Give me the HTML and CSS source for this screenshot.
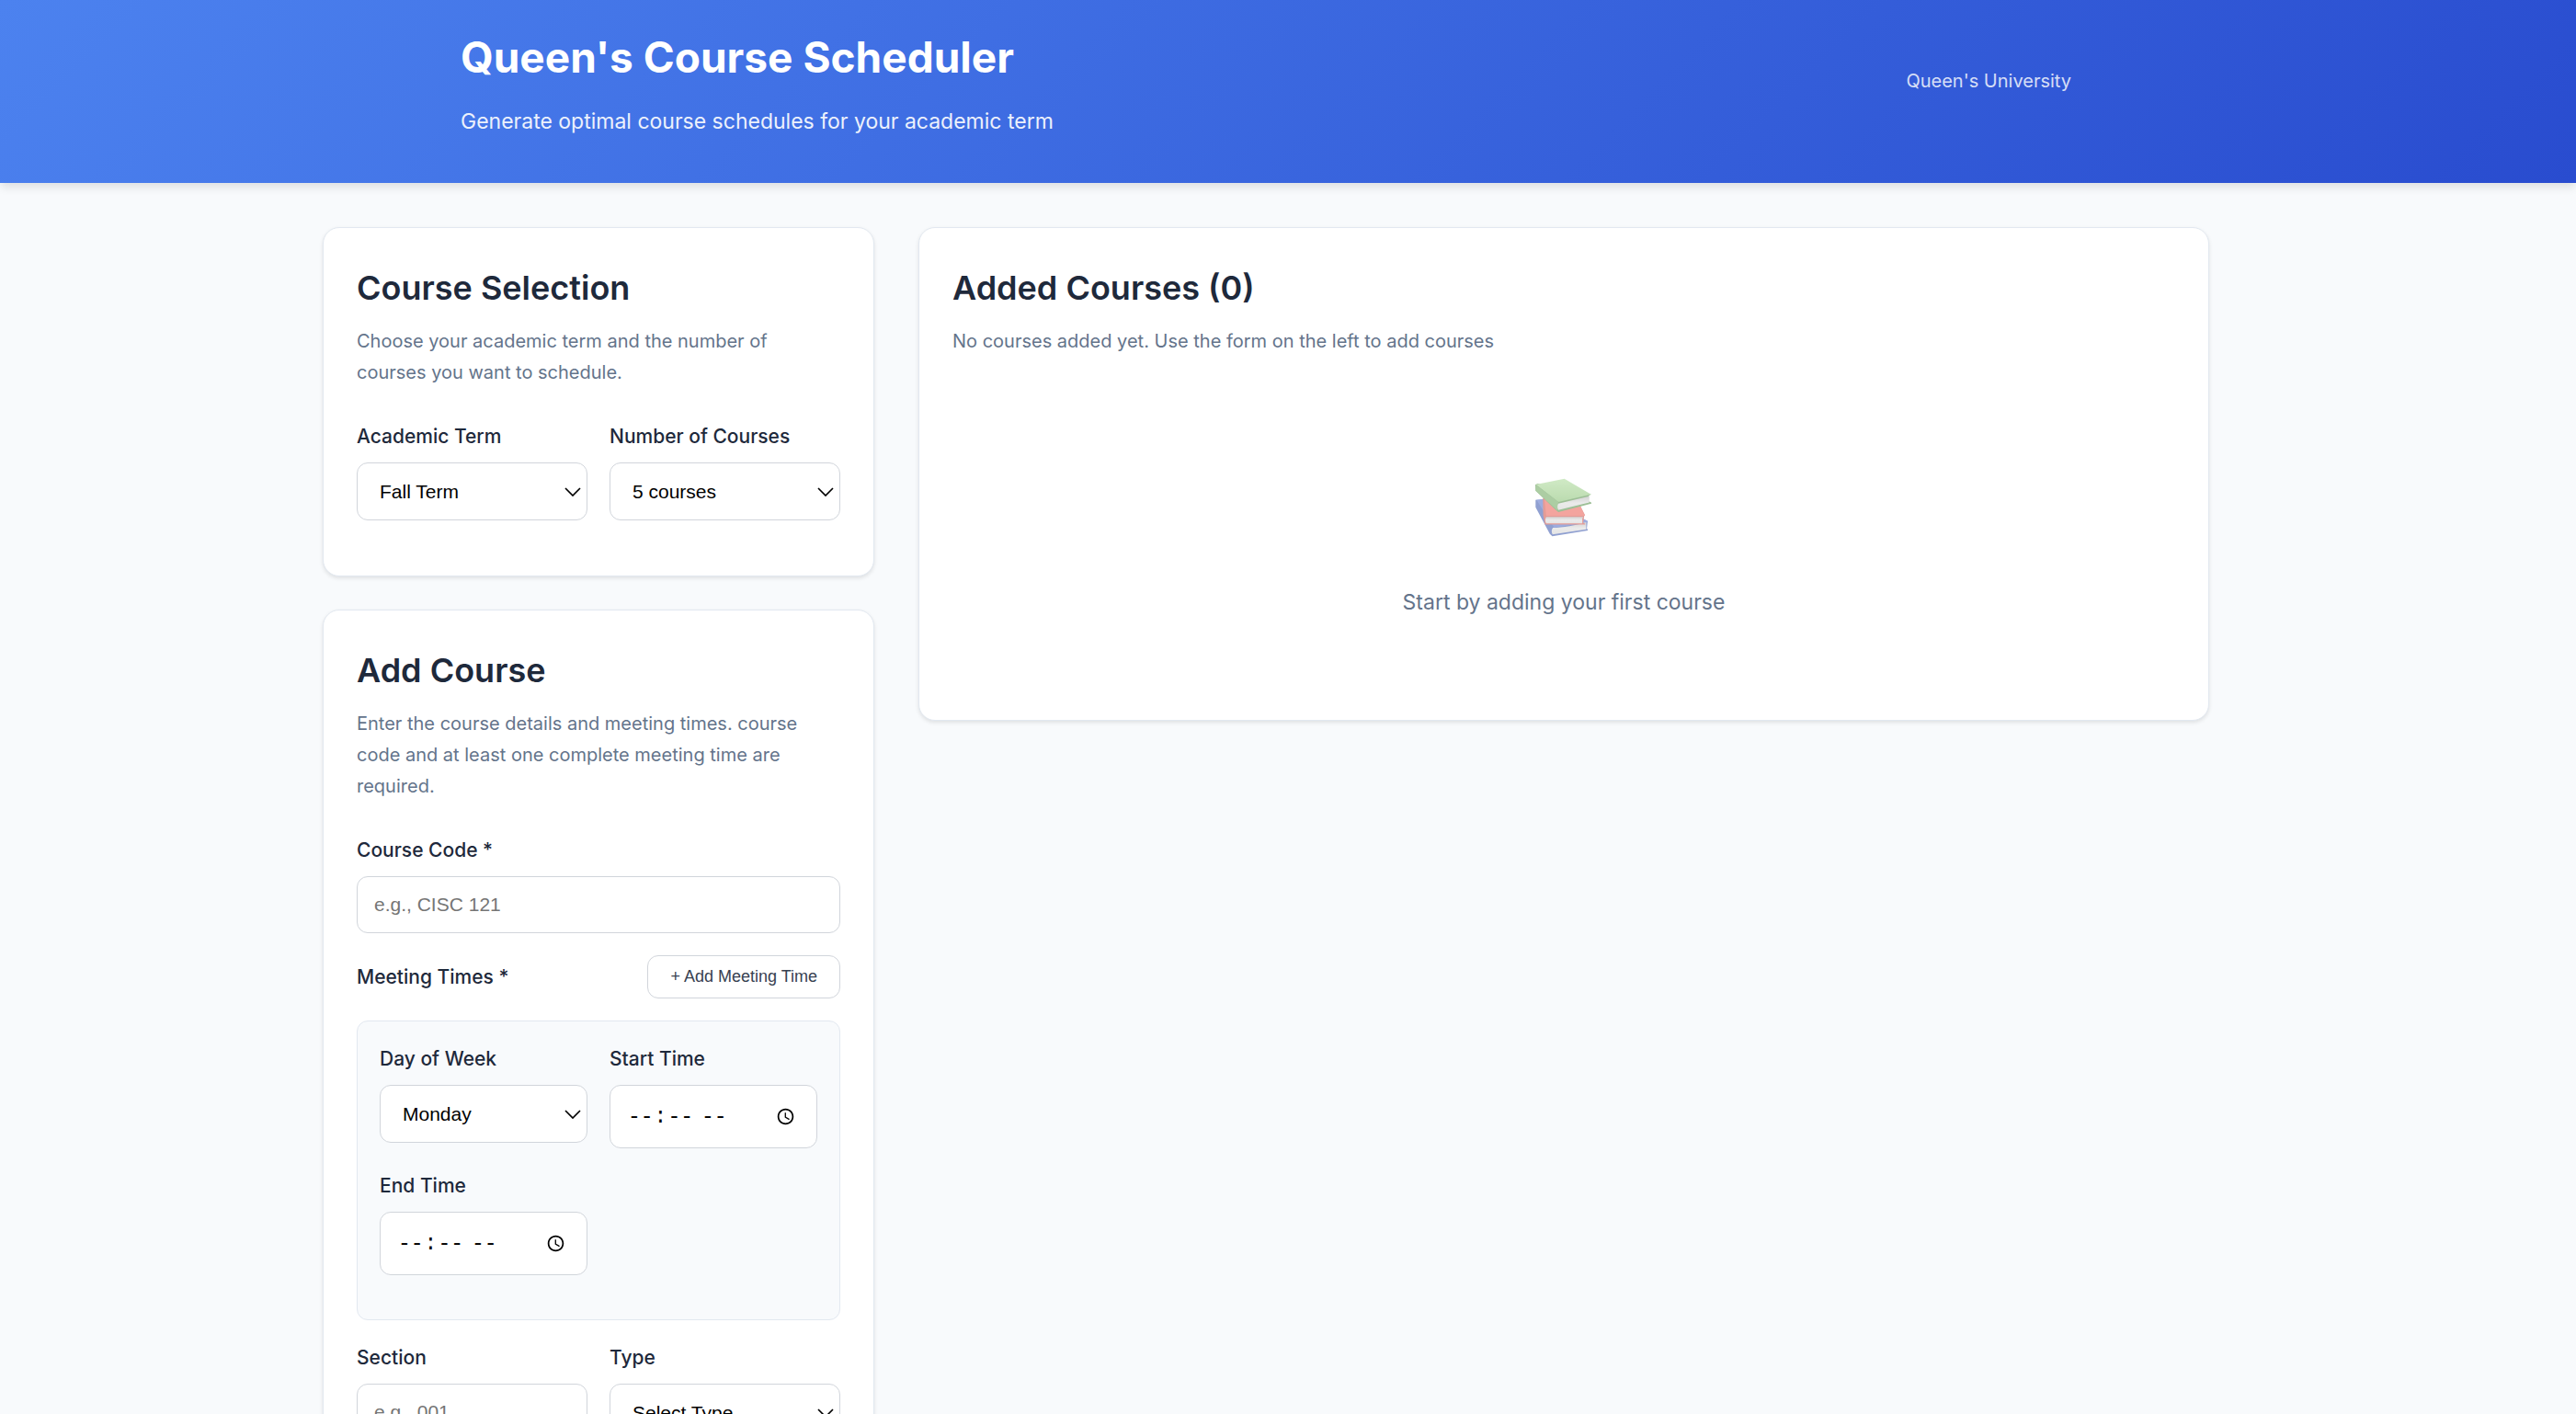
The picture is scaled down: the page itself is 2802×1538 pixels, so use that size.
FILE: index.html
```html
<!DOCTYPE html>
<html lang="en">
<head>
<meta charset="utf-8">
<meta name="viewport" content="width=device-width, initial-scale=1">
<title>Queen's Course Scheduler</title>
<link rel="stylesheet" href="styles.css">
</head>
<body>
<header class="site-header">
  <div class="header-inner">
    <div>
      <h1 class="site-title">Queen's Course Scheduler</h1>
      <p class="site-subtitle">Generate optimal course schedules for your academic term</p>
    </div>
    <span class="site-org">Queen's University</span>
  </div>
</header>
<main class="layout">
  <div class="sidebar">
    <section class="card">
      <h2 class="card-title">Course Selection</h2>
      <p class="card-text">Choose your academic term and the number of courses you want to schedule.</p>
      <div class="form-row">
        <div class="field">
          <label class="label" for="term">Academic Term</label>
          <div class="select">
            <select class="control" id="term"><option>Fall Term</option><option>Winter Term</option></select>
            <svg class="chevron" viewBox="0 0 18 10" aria-hidden="true"><path d="M1 1l8 8 8-8"/></svg>
          </div>
        </div>
        <div class="field">
          <label class="label" for="count">Number of Courses</label>
          <div class="select">
            <select class="control" id="count"><option>5 courses</option><option>4 courses</option></select>
            <svg class="chevron" viewBox="0 0 18 10" aria-hidden="true"><path d="M1 1l8 8 8-8"/></svg>
          </div>
        </div>
      </div>
    </section>
    <section class="card">
      <h2 class="card-title">Add Course</h2>
      <p class="card-text">Enter the course details and meeting times. course code and at least one complete meeting time are required.</p>
      <form>
        <div class="field">
          <label class="label" for="code">Course Code *</label>
          <input class="control" id="code" type="text" placeholder="e.g., CISC 121">
        </div>
        <div class="meeting-head">
          <span class="label" id="meetings">Meeting Times *</span>
          <button class="button" type="button">+ Add Meeting Time</button>
        </div>
        <div class="meeting form-row" role="group" aria-labelledby="meetings">
          <div class="field">
            <label class="label" for="day">Day of Week</label>
            <div class="select">
              <select class="control" id="day"><option>Monday</option><option>Tuesday</option></select>
              <svg class="chevron" viewBox="0 0 18 10" aria-hidden="true"><path d="M1 1l8 8 8-8"/></svg>
            </div>
          </div>
          <div class="field">
            <label class="label" for="start">Start Time</label>
            <input class="control time" id="start" type="time">
          </div>
          <div class="field">
            <label class="label" for="end">End Time</label>
            <input class="control time" id="end" type="time">
          </div>
        </div>
        <div class="form-row">
          <div class="field">
            <label class="label" for="section">Section</label>
            <input class="control" id="section" type="text" placeholder="e.g., 001">
          </div>
          <div class="field">
            <label class="label" for="type">Type</label>
            <div class="select">
              <select class="control" id="type"><option>Select Type</option><option>Lecture</option></select>
              <svg class="chevron" viewBox="0 0 18 10" aria-hidden="true"><path d="M1 1l8 8 8-8"/></svg>
            </div>
          </div>
        </div>
      </form>
    </section>
  </div>
  <section class="card">
    <h2 class="card-title">Added Courses (0)</h2>
    <p class="card-text">No courses added yet. Use the form on the left to add courses</p>
    <div class="empty">
      <svg class="books" viewBox="0 0 192 194" role="img" aria-label="Books">
        <defs>
          <linearGradient id="cover" x1="0" y1="0" x2="0" y2="1"><stop offset="0" stop-color="#a2d68c"/><stop offset="1" stop-color="#78b862"/></linearGradient>
          <linearGradient id="pages" x1="0" y1="0" x2="0" y2="1"><stop offset="0" stop-color="#a8a8a8"/><stop offset=".5" stop-color="#d8d8d8"/><stop offset="1" stop-color="#ccc"/></linearGradient>
        </defs>
        <path fill="#2444a4" d="M3 72l26-2 146 72-1 5-2 20 3 3v3L58 192 50 184 3 96z"/>
        <path fill="#3f5cc0" d="M6 72l22-1 144 70 2 5-110 17z"/>
        <path fill="url(#pages)" d="M60 164c30 0 80-8 110-19v24L59 186c-4-7-4-16 1-22z"/>
        <path fill="#c93a30" d="M27 66l120 20 19 36-3 4-3 22 6 2v3H34l-6-30z"/>
        <path fill="#e84c40" d="M32 68l116 18 17 38H38z"/>
        <path fill="url(#pages)" d="M38 128h122l-3 5v16H38c-4-6-4-15 0-21z"/>
        <path fill="#3e8030" d="M2 22l8-4 158 34 18 1-8 6v17l9 5v3L78 112 68 104 3 42z"/>
        <path fill="url(#cover)" d="M4 21L98 2l88 52L78 79z"/>
        <path fill="#5c9c4a" d="M4 22l74 57-3 28L3 42z"/>
        <path fill="url(#pages)" d="M78 84l102-24v20L78 105c-4-6-4-15 0-21z"/>
      </svg>
      <p class="empty-text">Start by adding your first course</p>
    </div>
  </section>
</main>
</body>
</html>
```
FILE: styles.css
```css
* {
  box-sizing: border-box;
  margin: 0;
}

body {
  background: #f8fafc;
  color: #1e293b;
  font-family: Inter, "Liberation Sans", sans-serif;
  font-size: 23px;
  line-height: 39px;
}

.site-header {
  background: linear-gradient(135deg, #4c82ef, #294ccf);
  box-shadow: 0 6px 9px -1px rgba(0, 0, 0, 0.1);
  color: #fff;
  padding: 24px 0 47px;
}

.header-inner {
  align-items: center;
  display: flex;
  justify-content: space-between;
  margin: 0 auto;
  max-width: 1800px;
  padding-right: 48px;
}

.site-title {
  font-size: 46px;
  font-weight: 700;
  line-height: 77px;
  margin-bottom: 12px;
}

.site-subtitle {
  opacity: 0.9;
}

.site-org {
  font-size: 20px;
  opacity: 0.8;
}

.layout {
  align-items: start;
  display: grid;
  gap: 48px;
  grid-template-columns: 600px 1fr;
  margin: 0 auto;
  max-width: 2100px;
  padding: 48px 48px 48px 0;
}

.sidebar {
  display: grid;
  gap: 36px;
}

.card {
  background: #fff;
  border: 1px solid #e2e8f0;
  border-radius: 18px;
  box-shadow: 0 2px 4px rgba(0, 0, 0, 0.1);
  padding: 36px;
}

.card-title {
  font-size: 36px;
  font-weight: 600;
  line-height: 58px;
  margin-bottom: 12px;
}

.card-text {
  color: #64748b;
  font-size: 20px;
  line-height: 34px;
  margin-bottom: 36px;
}

.form-row {
  display: grid;
  column-gap: 24px;
  grid-template-columns: 1fr 1fr;
}

.field {
  margin-bottom: 24px;
}

.label {
  display: block;
  font-size: 21px;
  font-weight: 500;
  line-height: 33px;
}

.field .label {
  margin-bottom: 12px;
}

.control {
  appearance: none;
  background: #fff;
  border: 1px solid #d1d5db;
  border-radius: 12px;
  color: #000;
  display: block;
  font: 21px/24px "Liberation Sans", sans-serif;
  height: 62px;
  padding: 18px;
  width: 100%;
}

.control::placeholder {
  color: #757575;
}

.select {
  align-items: center;
  display: grid;
}

.select .control,
.chevron {
  grid-area: 1 / 1;
}

.select .control {
  height: 63px;
  padding: 0 24px;
}

.chevron {
  fill: none;
  height: 10px;
  justify-self: end;
  margin-right: 7px;
  pointer-events: none;
  stroke: #000;
  stroke-width: 1.7;
  width: 18px;
}

.time {
  font-family: "Liberation Mono", monospace;
  font-size: 23px;
  height: 69px;
}

.time::-webkit-calendar-picker-indicator {
  height: 21px;
  margin-right: 5px;
  padding: 0;
  width: 21px;
}

.meeting-head {
  align-items: center;
  display: flex;
  justify-content: space-between;
  margin-bottom: 24px;
}

.button {
  background: #fff;
  border: 1px solid #d1d5db;
  border-radius: 12px;
  color: #374151;
  font: 18px/21px "Liberation Sans", sans-serif;
  padding: 12px 24px;
}

.meeting {
  background: #f8fafc;
  border: 1px solid #e2e8f0;
  border-radius: 12px;
  margin-bottom: 24px;
  padding: 24px;
}

.empty {
  align-items: center;
  display: flex;
  flex-direction: column;
  padding: 96px 48px 72px;
}

.books {
  height: 64px;
  margin-bottom: 52px;
  opacity: 0.5;
  width: 64px;
}

.empty-text {
  color: #64748b;
}
```
